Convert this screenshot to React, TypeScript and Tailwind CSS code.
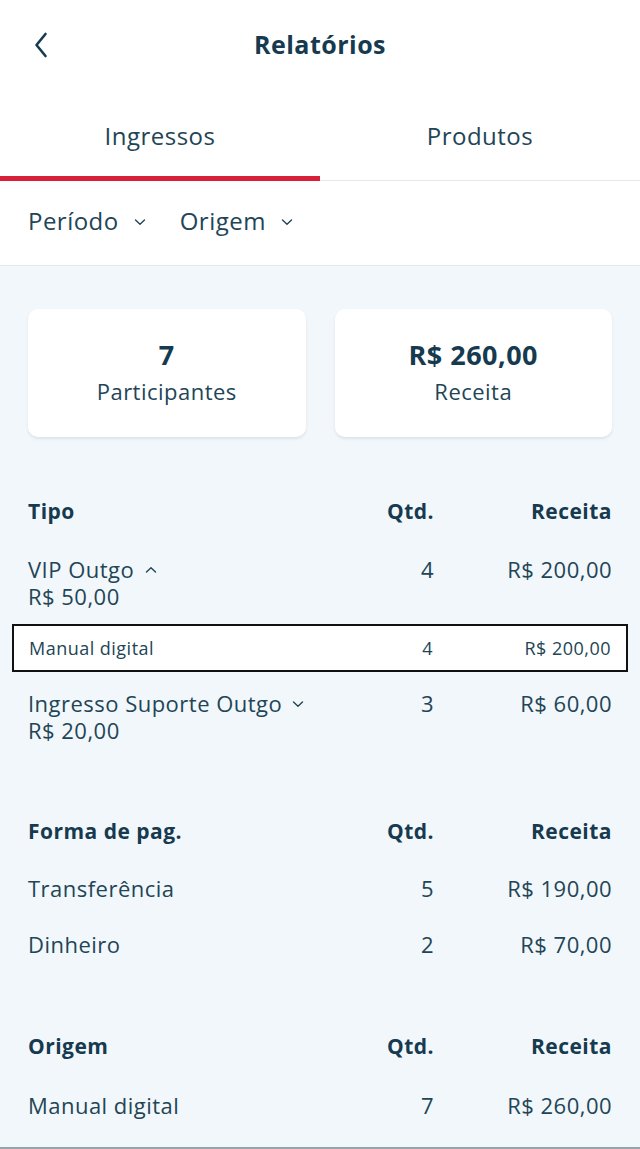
import React, { useState } from 'react';

type Row = { name: string; price?: string; qtd: number; total: string };

function Chevron({ up = false, className = '' }: { up?: boolean; className?: string }) {
  return (
    <svg viewBox="0 0 12 8" className={className} fill="none" stroke="currentColor" strokeWidth="1.4" strokeLinecap="round" strokeLinejoin="round">
      {up ? <polyline points="1.5,6 6,1.8 10.5,6" /> : <polyline points="1.5,2 6,6.2 10.5,2" />}
    </svg>
  );
}

function SectionHeader({ title }: { title: string }) {
  return (
    <div className="grid grid-cols-[1fr_90px_178px] items-center h-[56px] text-[21px] font-bold text-[#163a4f]">
      <span>{title}</span>
      <span className="text-right">Qtd.</span>
      <span className="text-right">Receita</span>
    </div>
  );
}

export default function App() {
  const [tab, setTab] = useState<'ingressos' | 'produtos'>('ingressos');

  const tipos: Row[] = [
    { name: 'VIP Outgo', price: 'R$ 50,00', qtd: 4, total: 'R$ 200,00' },
    { name: 'Ingresso Suporte Outgo', price: 'R$ 20,00', qtd: 3, total: 'R$ 60,00' },
  ];

  const pagamentos: Row[] = [
    { name: 'Transferência', qtd: 5, total: 'R$ 190,00' },
    { name: 'Dinheiro', qtd: 2, total: 'R$ 70,00' },
  ];

  return (
    <div className="h-[1149px] w-full overflow-hidden flex flex-col bg-[#f2f7fb] text-[#224556] font-['Open_Sans',sans-serif] tracking-[0.03em] border-b-2 border-[#9aa3a8]">
      {/* Header */}
      <div className="bg-white">
        <div className="grid grid-cols-[1fr_auto_1fr] items-center h-[90px] px-[34px]">
          <button className="w-[30px] h-[40px] flex items-center text-[#163a4f]">
            <svg viewBox="0 0 14 26" className="w-[14px] h-[26px]" fill="none" stroke="currentColor" strokeWidth="2.6" strokeLinecap="round" strokeLinejoin="round">
              <polyline points="11.5,2 2.5,13 11.5,24" />
            </svg>
          </button>
          <h1 className="text-[25px] font-bold text-[#163a4f]">Relatórios</h1>
          <div />
        </div>

        {/* Tabs */}
        <div className="flex h-[91px] border-b border-[#e4e9ee]">
          <button
            onClick={() => setTab('ingressos')}
            className={`flex-1 flex items-center justify-center text-[24px] border-b-[5px] -mb-px pt-[6px] ${
              tab === 'ingressos' ? 'border-[#d8203b]' : 'border-transparent'
            }`}
          >
            Ingressos
          </button>
          <button
            onClick={() => setTab('produtos')}
            className={`flex-1 flex items-center justify-center text-[24px] border-b-[5px] -mb-px pt-[6px] ${
              tab === 'produtos' ? 'border-[#d8203b]' : 'border-transparent'
            }`}
          >
            Produtos
          </button>
        </div>

        {/* Filters */}
        <div className="flex items-center gap-[34px] h-[85px] px-[28px] pb-[4px] border-b border-[#e4e9ee] text-[24px]">
          <button className="flex items-center gap-[15px]">
            Período <Chevron className="w-[12px] h-[8px] mt-[2px]" />
          </button>
          <button className="flex items-center gap-[15px]">
            Origem <Chevron className="w-[12px] h-[8px] mt-[2px]" />
          </button>
        </div>
      </div>

      <div className="flex-1 px-[28px] pt-[43px]">
        {/* Summary cards */}
        <div className="grid grid-cols-2 gap-[29px]">
          <div className="h-[128px] bg-white rounded-[10px] shadow-[0_2px_3px_rgba(30,60,80,0.10)] flex flex-col items-center justify-center">
            <span className="text-[27px] font-bold text-[#163a4f] leading-[36px]">7</span>
            <span className="text-[22px] leading-[36px]">Participantes</span>
          </div>
          <div className="h-[128px] bg-white rounded-[10px] shadow-[0_2px_3px_rgba(30,60,80,0.10)] flex flex-col items-center justify-center">
            <span className="text-[27px] font-bold text-[#163a4f] leading-[36px]">R$ 260,00</span>
            <span className="text-[22px] leading-[36px]">Receita</span>
          </div>
        </div>

        {/* Tipo */}
        <div className="mt-[47px]">
          <SectionHeader title="Tipo" />
          <div className="mt-[16px] grid grid-cols-[1fr_90px_178px] text-[22px] leading-[27px]">
            <div>
              <div className="flex items-center gap-[11px]">
                {tipos[0].name}
                <Chevron up className="w-[12px] h-[8px]" />
              </div>
              <div>{tipos[0].price}</div>
            </div>
            <span className="text-right">{tipos[0].qtd}</span>
            <span className="text-right">{tipos[0].total}</span>
          </div>

          <div className="-mx-[16px] mt-[14px] h-[48px] bg-white border-2 border-[#111] px-[15px] grid grid-cols-[1fr_90px_178px] items-center text-[18px]">
            <span>Manual digital</span>
            <span className="text-right">4</span>
            <span className="text-right">R$ 200,00</span>
          </div>

          <div className="mt-[18px] grid grid-cols-[1fr_90px_178px] text-[22px] leading-[27px]">
            <div>
              <div className="flex items-center gap-[10px]">
                {tipos[1].name}
                <Chevron className="w-[12px] h-[8px]" />
              </div>
              <div>{tipos[1].price}</div>
            </div>
            <span className="text-right">{tipos[1].qtd}</span>
            <span className="text-right">{tipos[1].total}</span>
          </div>
        </div>

        {/* Forma de pagamento */}
        <div className="mt-[60px]">
          <SectionHeader title="Forma de pag." />
          {pagamentos.map((p) => (
            <div key={p.name} className="grid grid-cols-[1fr_90px_178px] items-center h-[56px] text-[22px]">
              <span>{p.name}</span>
              <span className="text-right">{p.qtd}</span>
              <span className="text-right">{p.total}</span>
            </div>
          ))}
        </div>

        {/* Origem */}
        <div className="mt-[47px]">
          <SectionHeader title="Origem" />
          <div className="grid grid-cols-[1fr_90px_178px] items-center h-[60px] text-[22px]">
            <span>Manual digital</span>
            <span className="text-right">7</span>
            <span className="text-right">R$ 260,00</span>
          </div>
        </div>
      </div>
    </div>
  );
}
